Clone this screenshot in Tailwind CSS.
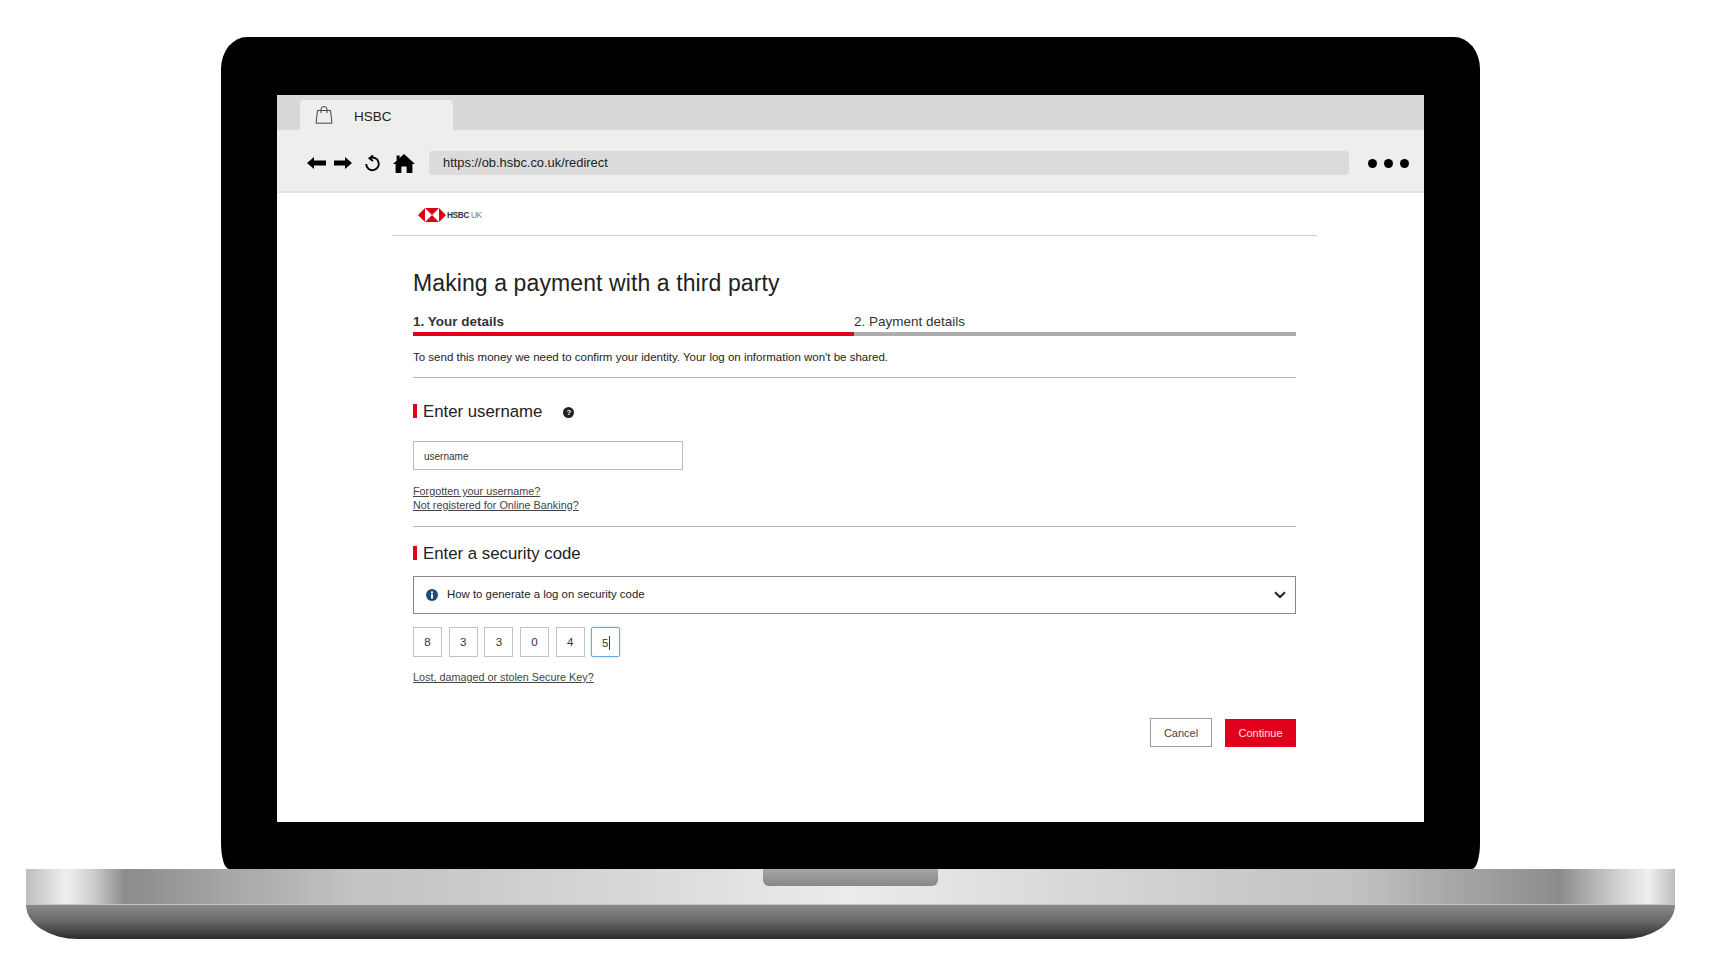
<!doctype html>
<html>
<head>
<meta charset="utf-8">
<script src="https://cdn.jsdelivr.net/npm/@tailwindcss/browser@4"></script>
<title>HSBC</title>
</head>
<body class="bg-white font-['Liberation_Sans',Arial,sans-serif] text-[#222]">
<div class="w-[1701px] h-[975px] pt-[37px] flex flex-col items-center overflow-hidden">
  <!-- lid -->
  <div class="w-[1259px] h-[832px] bg-black rounded-t-[26px_32px] rounded-b-[8px_26px] pt-[58px] pl-[56px] shrink-0">
    <div class="w-[1147px] h-[727px] bg-white flex flex-col">
      <!-- tabs -->
      <div class="h-[35px] bg-[#d8d8d8] pt-[5px] pl-[23px] shrink-0">
        <div class="w-[153px] h-[30px] bg-[#eeeeee] rounded-t-[4px] flex items-center pl-[15px]">
          <svg class="w-[18px] h-[18px]" viewBox="0 0 18 18" fill="none" stroke="#444" stroke-width="1"><path d="M2.5 4.5H15.5L17 17.2H1Z"/><path d="M6 7V3Q6 0.6 9 0.6T12 3V7"/></svg>
          <span class="ml-[21px] pt-[4px] text-[13.5px] leading-none text-[#222]">HSBC</span>
        </div>
      </div>
      <!-- toolbar -->
      <div class="h-[63px] bg-[#eeeeee] border-b-2 border-[#e2e2e2] flex items-center pl-[30px] pt-[5px] shrink-0">
        <svg class="w-[19px] h-[14px]" viewBox="0 0 19 14" fill="#000"><path d="M0 7 7 1V4.5H19V9.5H7V13Z"/></svg>
        <svg class="w-[18px] h-[14px] ml-[8px]" viewBox="0 0 18 14" fill="#000"><path d="M18 7 11 1V4.5H0V9.5H11V13Z"/></svg>
        <svg class="w-[17px] h-[17px] ml-[12px]" viewBox="0 0 17 17" fill="none" stroke="#000" stroke-width="1.9"><path d="M6 3.1A6.3 6.3 0 1 1 2.2 9"/><path d="M9 0.4 5.4 3.2 9 6" stroke-width="1.8"/></svg>
        <svg class="w-[22px] h-[19px] ml-[12px]" viewBox="0 0 22 19" fill="#000"><path d="M11 0 22 10H19.4V19H13.6V12.5H8.4V19H2.6V10H0L3.6 6.7V1.5H6.6V4Z"/></svg>
        <div class="w-[920px] h-[24px] ml-[14px] bg-[#dbdbdb] rounded-[4px] flex items-center pl-[14px] text-[12.9px] text-[#222]">https://ob.hsbc.co.uk/redirect</div>
        <div class="flex gap-[7px] ml-[19px]">
          <span class="w-[9px] h-[9px] rounded-full bg-black"></span>
          <span class="w-[9px] h-[9px] rounded-full bg-black"></span>
          <span class="w-[9px] h-[9px] rounded-full bg-black"></span>
        </div>
      </div>
      <!-- page -->
      <div class="w-[925px] ml-[115px] flex-1">
        <div class="h-[43px] border-b border-[#cccccc] pl-[26px] pt-[15px] flex items-start">
          <svg class="w-[28px] h-[14px]" viewBox="0 0 28 14"><rect x="7" width="14" height="14" fill="#fff"/><path d="M0 7 7 0V14Z M28 7 21 0V14Z M7 0H21L14 7Z M7 14H21L14 7Z" fill="#db0011"/></svg>
          <span class="ml-[1px] mt-[2.5px] text-[8.2px] leading-[9px] font-bold tracking-[-0.3px] text-[#333]">HSBC<span class="font-normal text-[#777]"> UK</span></span>
        </div>
        <div class="mx-[21px] w-[883px]">
          <h1 class="mt-[33px] text-[23px] leading-[28px] font-normal tracking-[0.1px] text-[#222]">Making a payment with a third party</h1>
          <div class="mt-[13px] flex text-[13.5px] leading-[16px]">
            <div class="w-[441px]">
              <div class="font-bold text-[#333] h-[22px] pt-[4px]">1. Your details</div>
              <div class="h-[4px] bg-[#e0001b]"></div>
            </div>
            <div class="flex-1">
              <div class="text-[#333] h-[22px] pt-[4px]">2. Payment details</div>
              <div class="h-[4px] bg-[#adadad]"></div>
            </div>
          </div>
          <p class="mt-[14px] text-[11.5px] leading-[14px] text-[#222]">To send this money we need to confirm your identity. Your log on information won't be shared.</p>
          <div class="mt-[13px] border-t border-[#bbbbbb]"></div>

          <div class="mt-[26px] flex items-center h-[14px]">
            <span class="w-[4px] h-[14px] bg-[#e0001b]"></span>
            <span class="ml-[6px] pt-[2px] text-[16.8px] leading-[20px] text-[#222]">Enter username</span>
            <span class="ml-[21px] mt-[2px] w-[11px] h-[11px] rounded-full bg-[#222] text-white text-[8px] leading-[11px] font-bold text-center">?</span>
          </div>
          <div class="mt-[23px] w-[270px] h-[29px] border border-[#bbbbbb] flex items-center pl-[10px] pt-[2px] text-[10px] text-[#333]">username</div>
          <div class="mt-[14px] text-[10.8px] leading-[14px] text-[#444] underline">
            <div>Forgotten your username?</div>
            <div>Not registered for Online Banking?</div>
          </div>
          <div class="mt-[14px] border-t border-[#bbbbbb]"></div>

          <div class="mt-[19px] flex items-center h-[14px]">
            <span class="w-[4px] h-[14px] bg-[#e0001b]"></span>
            <span class="ml-[6px] pt-[2px] text-[16.8px] leading-[20px] text-[#222]">Enter a security code</span>
          </div>
          <div class="mt-[16px] h-[38px] border border-[#888888] flex items-center pl-[12px] pr-[9px]">
            <svg class="w-[12px] h-[12px]" viewBox="0 0 12 12"><circle cx="6" cy="6" r="6" fill="#1a4d7c"/><rect x="5" y="5" width="2" height="4.5" fill="#fff"/><rect x="5" y="2.4" width="2" height="1.8" fill="#fff"/></svg>
            <span class="ml-[9px] text-[11.4px] text-[#222]">How to generate a log on security code</span>
            <svg class="ml-auto w-[12px] h-[8px]" viewBox="0 0 12 8" fill="none" stroke="#222" stroke-width="2"><path d="M1 1.2 6 6 11 1.2"/></svg>
          </div>
          <div class="mt-[13px] flex gap-[6.7px]">
            <div class="w-[29px] h-[30px] border border-[#c2c2c2] flex items-center justify-center pt-[1px] text-[11.5px] text-[#333]">8</div>
            <div class="w-[29px] h-[30px] border border-[#c2c2c2] flex items-center justify-center pt-[1px] text-[11.5px] text-[#333]">3</div>
            <div class="w-[29px] h-[30px] border border-[#c2c2c2] flex items-center justify-center pt-[1px] text-[11.5px] text-[#333]">3</div>
            <div class="w-[29px] h-[30px] border border-[#c2c2c2] flex items-center justify-center pt-[1px] text-[11.5px] text-[#333]">0</div>
            <div class="w-[29px] h-[30px] border border-[#c2c2c2] flex items-center justify-center pt-[1px] text-[11.5px] text-[#333]">4</div>
            <div class="w-[29px] h-[30px] border border-[#6ea6e6] rounded-[2px] shadow-[0_0_2px_#9cc4f0] flex items-center justify-center pt-[1px] text-[11.5px] text-[#333]"><span class="border-r border-[#333] leading-[14px] pr-[0.5px]">5</span></div>
          </div>
          <div class="mt-[13px] text-[10.8px] leading-[14px] text-[#444] underline">Lost, damaged or stolen Secure Key?</div>
          <div class="mt-[34px] flex justify-end items-center gap-[13px]">
            <div class="w-[62px] h-[29px] border border-[#999999] flex items-center justify-center pt-[2px] text-[11px] text-[#444]">Cancel</div>
            <div class="w-[71px] h-[28px] bg-[#e0001b] flex items-center justify-center pt-[2px] text-[11px] text-[#ffe0e0]">Continue</div>
          </div>
        </div>
      </div>
    </div>
  </div>
  <!-- base -->
  <div class="w-[1649px] shrink-0 relative">
    <div class="h-[36px] border-b border-[#c4c4c4] bg-[linear-gradient(90deg,#bdbdbd_0%,#dcdcdc_1.5%,#efefef_2.4%,#d0d0d0_4%,#8c8c8c_6%,#a5a5a5_12%,#c4c4c4_20%,#c8c8c8_25%,#dddddd_40%,#ececec_50%,#dddddd_60%,#c8c8c8_75%,#c4c4c4_80%,#a5a5a5_87%,#8c8c8c_93%,#d0d0d0_96.5%,#efefef_98.4%,#bdbdbd_100%)] flex justify-center">
      <div class="w-[175px] h-[17px] rounded-b-[6px] bg-[linear-gradient(180deg,#a6a6a6,#888888)]"></div>
    </div>
    <div class="h-[34px] rounded-b-[52px_34px] bg-[linear-gradient(180deg,#8a8a8a,#666666_50%,#2c2c2c)]"></div>
  </div>
</div>
</body>
</html>
